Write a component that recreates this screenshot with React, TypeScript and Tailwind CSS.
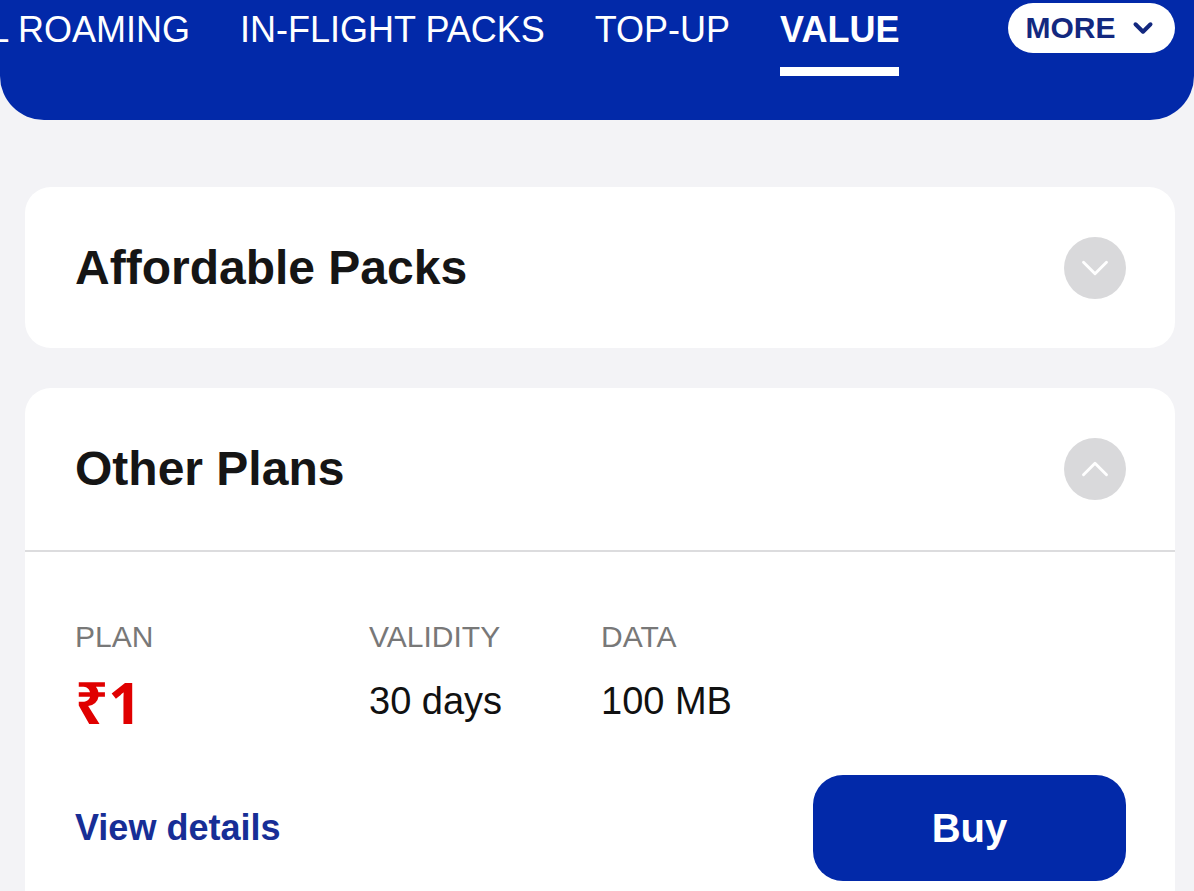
import { ChevronDown, ChevronUp } from "lucide-react";

const tabs = ["INTERNATIONAL ROAMING", "IN-FLIGHT PACKS", "TOP-UP", "VALUE"];

function Tab({ label, active }: { label: string; active?: boolean }) {
  return (
    <div className="flex flex-col shrink-0">
      <span
        className={`text-[36px] leading-none whitespace-nowrap text-white ${
          active ? "font-bold" : "font-normal"
        }`}
      >
        {label}
      </span>
      {active && <div className="mt-[19px] h-[9px] w-full bg-white" />}
    </div>
  );
}

function CircleToggle({ open }: { open?: boolean }) {
  return (
    <div className="flex h-[62px] w-[62px] items-center justify-center rounded-full bg-[#d9d9db]">
      {open ? (
        <ChevronUp size={46} strokeWidth={1.5} className="text-white" />
      ) : (
        <ChevronDown size={46} strokeWidth={1.5} className="text-white" />
      )}
    </div>
  );
}

export default function App() {
  return (
    <div
      className="h-[891px] w-full overflow-hidden bg-[#f3f3f6]"
      style={{ fontFamily: '"Liberation Sans", Arial, "Noto Sans", sans-serif' }}
    >
      {/* Header with tabs, scrolled so the first tab is partly hidden */}
      <div className="relative h-[120px] overflow-hidden rounded-b-[44px] bg-[#0229a9]">
        <div className="ml-[-276px] flex gap-[50px] pt-[12px]">
          {tabs.map((t) => (
            <Tab key={t} label={t} active={t === "VALUE"} />
          ))}
        </div>
        <button className="absolute right-[19px] top-[3px] flex h-[50px] w-[167px] items-center justify-center gap-[12px] rounded-full bg-white">
          <span className="text-[30px] font-semibold leading-none text-[#13287f]">MORE</span>
          <ChevronDown size={30} strokeWidth={3.2} className="text-[#13287f]" />
        </button>
      </div>

      {/* Affordable Packs */}
      <div className="ml-[25px] mr-[19px] mt-[67px] flex h-[161px] items-center justify-between rounded-[26px] bg-white pl-[50px] pr-[49px]">
        <span className="text-[48px] font-bold leading-none text-[#151515]">Affordable Packs</span>
        <CircleToggle />
      </div>

      {/* Other Plans */}
      <div className="ml-[25px] mr-[19px] mt-[40px] rounded-t-[26px] bg-white">
        <div className="flex h-[162px] items-center justify-between pl-[50px] pr-[49px]">
          <span className="text-[48px] font-bold leading-none text-[#151515]">Other Plans</span>
          <CircleToggle open />
        </div>
        <div className="h-[2px] bg-[#dcdcde]" />

        <div className="pl-[50px] pr-[49px] pt-[70px] pb-[40px]">
          <div className="flex">
            <div className="flex w-[294px] flex-col">
              <span className="text-[30px] leading-none text-[#787878]">PLAN</span>
              <span
                className="mt-[21px] text-[58px] font-bold leading-none text-[#e00000]"
                style={{ fontFamily: '"Noto Sans", "DejaVu Sans", sans-serif' }}
              >
                ₹1
              </span>
            </div>
            <div className="flex w-[232px] flex-col">
              <span className="text-[30px] leading-none text-[#787878]">VALIDITY</span>
              <span className="mt-[30px] text-[38px] leading-none text-[#111]">30 days</span>
            </div>
            <div className="flex flex-col">
              <span className="text-[30px] leading-none text-[#787878]">DATA</span>
              <span className="mt-[30px] text-[38px] leading-none text-[#111]">100 MB</span>
            </div>
          </div>

          <div className="mt-[44px] flex items-center justify-between">
            <span className="text-[36px] font-semibold leading-none text-[#172e96]">View details</span>
            <button className="flex h-[106px] w-[313px] items-center justify-center rounded-[30px] bg-[#0229a9]">
              <span className="text-[40px] font-bold leading-none text-white">Buy</span>
            </button>
          </div>
        </div>
      </div>
    </div>
  );
}
